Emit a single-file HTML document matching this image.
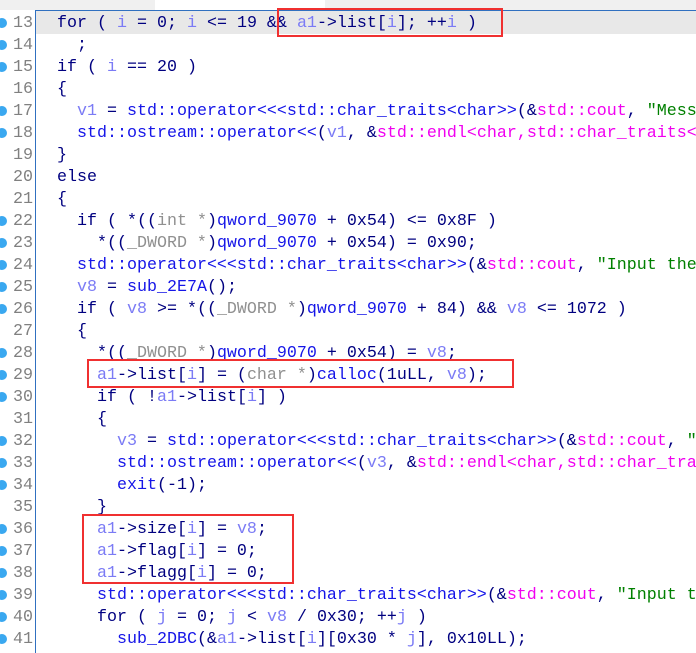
<!DOCTYPE html>
<html><head><meta charset="utf-8"><style>
html,body{margin:0;padding:0}
body{width:696px;height:653px;overflow:hidden;background:#fff;position:relative;font-family:"Liberation Mono",monospace;font-size:16.67px}
.r{position:absolute;left:57px;height:22px;line-height:22px;white-space:pre;color:#000080;margin-top:2px}
.n{position:absolute;left:0;width:33px;text-align:right;height:22px;line-height:22px;color:#808080;white-space:pre;margin-top:2px}
.d{position:absolute;left:-3px;width:10px;height:10px;border-radius:50%;background:#3aa8f0;margin-top:1px}
.v{color:#7b7bf5}.f{color:#1515e8}.c{color:#909090}.m{color:#f000f0}.s{color:#008000}
.box{position:absolute;border:2px solid #f03030;box-sizing:border-box}
</style></head><body>
<div style="position:absolute;left:0;top:0;width:696px;height:10px;background:#f0f0f0"></div>
<div style="position:absolute;left:155px;top:0;width:170px;height:10px;background:#fff"></div>
<div style="position:absolute;left:36px;top:10px;width:660px;height:1px;background:#3070c0"></div>
<div style="position:absolute;left:35px;top:10px;width:1px;height:643px;background:#3070c0"></div>
<div style="position:absolute;left:36px;top:11px;width:660px;height:23px;background:#e8e8e8"></div>

<div class="r" style="top:11px">for ( <span class="v">i</span> = 0; <span class="v">i</span> &lt;= 19 &amp;&amp; <span class="v">a1</span>-&gt;list[<span class="v">i</span>]; ++<span class="v">i</span> )</div>
<div class="r" style="top:33px">  ;</div>
<div class="r" style="top:55px">if ( <span class="v">i</span> == 20 )</div>
<div class="r" style="top:77px">{</div>
<div class="r" style="top:99px">  <span class="v">v1</span> = <span class="f">std::operator&lt;&lt;&lt;std::char_traits&lt;char&gt;&gt;</span>(&amp;<span class="m">std::cout</span>, <span class="s">"Message"</span></div>
<div class="r" style="top:121px">  <span class="f">std::ostream::operator&lt;&lt;</span>(<span class="v">v1</span>, &amp;<span class="m">std::endl&lt;char,std::char_traits&lt;char&gt;&gt;</span></div>
<div class="r" style="top:143px">}</div>
<div class="r" style="top:165px">else</div>
<div class="r" style="top:187px">{</div>
<div class="r" style="top:209px">  if ( *((<span class="c">int *</span>)<span class="f">qword_9070</span> + 0x54) &lt;= 0x8F )</div>
<div class="r" style="top:231px">    *((<span class="c">_DWORD *</span>)<span class="f">qword_9070</span> + 0x54) = 0x90;</div>
<div class="r" style="top:253px">  <span class="f">std::operator&lt;&lt;&lt;std::char_traits&lt;char&gt;&gt;</span>(&amp;<span class="m">std::cout</span>, <span class="s">"Input the size"</span></div>
<div class="r" style="top:275px">  <span class="v">v8</span> = <span class="f">sub_2E7A</span>();</div>
<div class="r" style="top:297px">  if ( <span class="v">v8</span> &gt;= *((<span class="c">_DWORD *</span>)<span class="f">qword_9070</span> + 84) &amp;&amp; <span class="v">v8</span> &lt;= 1072 )</div>
<div class="r" style="top:319px">  {</div>
<div class="r" style="top:341px">    *((<span class="c">_DWORD *</span>)<span class="f">qword_9070</span> + 0x54) = <span class="v">v8</span>;</div>
<div class="r" style="top:363px">    <span class="v">a1</span>-&gt;list[<span class="v">i</span>] = (<span class="c">char *</span>)<span class="f">calloc</span>(1uLL, <span class="v">v8</span>);</div>
<div class="r" style="top:385px">    if ( !<span class="v">a1</span>-&gt;list[<span class="v">i</span>] )</div>
<div class="r" style="top:407px">    {</div>
<div class="r" style="top:429px">      <span class="v">v3</span> = <span class="f">std::operator&lt;&lt;&lt;std::char_traits&lt;char&gt;&gt;</span>(&amp;<span class="m">std::cout</span>, <span class="s">"Error"</span></div>
<div class="r" style="top:451px">      <span class="f">std::ostream::operator&lt;&lt;</span>(<span class="v">v3</span>, &amp;<span class="m">std::endl&lt;char,std::char_traits&lt;char&gt;&gt;</span></div>
<div class="r" style="top:473px">      <span class="f">exit</span>(-1);</div>
<div class="r" style="top:495px">    }</div>
<div class="r" style="top:517px">    <span class="v">a1</span>-&gt;size[<span class="v">i</span>] = <span class="v">v8</span>;</div>
<div class="r" style="top:539px">    <span class="v">a1</span>-&gt;flag[<span class="v">i</span>] = 0;</div>
<div class="r" style="top:561px">    <span class="v">a1</span>-&gt;flagg[<span class="v">i</span>] = 0;</div>
<div class="r" style="top:583px">    <span class="f">std::operator&lt;&lt;&lt;std::char_traits&lt;char&gt;&gt;</span>(&amp;<span class="m">std::cout</span>, <span class="s">"Input the content"</span></div>
<div class="r" style="top:605px">    for ( <span class="v">j</span> = 0; <span class="v">j</span> &lt; <span class="v">v8</span> / 0x30; ++<span class="v">j</span> )</div>
<div class="r" style="top:627px">      <span class="f">sub_2DBC</span>(&amp;<span class="v">a1</span>-&gt;list[<span class="v">i</span>][0x30 * <span class="v">j</span>], 0x10LL);</div>

<div class="n" style="top:11px">13</div><div class="n" style="top:33px">14</div><div class="n" style="top:55px">15</div><div class="n" style="top:77px">16</div><div class="n" style="top:99px">17</div><div class="n" style="top:121px">18</div><div class="n" style="top:143px">19</div><div class="n" style="top:165px">20</div><div class="n" style="top:187px">21</div><div class="n" style="top:209px">22</div><div class="n" style="top:231px">23</div><div class="n" style="top:253px">24</div><div class="n" style="top:275px">25</div><div class="n" style="top:297px">26</div><div class="n" style="top:319px">27</div><div class="n" style="top:341px">28</div><div class="n" style="top:363px">29</div><div class="n" style="top:385px">30</div><div class="n" style="top:407px">31</div><div class="n" style="top:429px">32</div><div class="n" style="top:451px">33</div><div class="n" style="top:473px">34</div><div class="n" style="top:495px">35</div><div class="n" style="top:517px">36</div><div class="n" style="top:539px">37</div><div class="n" style="top:561px">38</div><div class="n" style="top:583px">39</div><div class="n" style="top:605px">40</div><div class="n" style="top:627px">41</div>

<div class="d" style="top:17px"></div><div class="d" style="top:39px"></div><div class="d" style="top:61px"></div><div class="d" style="top:105px"></div><div class="d" style="top:127px"></div>
<div class="d" style="top:215px"></div><div class="d" style="top:237px"></div><div class="d" style="top:259px"></div><div class="d" style="top:281px"></div><div class="d" style="top:303px"></div>
<div class="d" style="top:347px"></div><div class="d" style="top:369px"></div><div class="d" style="top:391px"></div>
<div class="d" style="top:435px"></div><div class="d" style="top:457px"></div><div class="d" style="top:479px"></div>
<div class="d" style="top:523px"></div><div class="d" style="top:545px"></div><div class="d" style="top:567px"></div><div class="d" style="top:589px"></div><div class="d" style="top:611px"></div><div class="d" style="top:633px"></div>

<div class="box" style="left:277px;top:8px;width:226px;height:29px"></div>
<div class="box" style="left:87px;top:359px;width:427px;height:29px"></div>
<div class="box" style="left:82px;top:514px;width:212px;height:70px"></div>
</body></html>
